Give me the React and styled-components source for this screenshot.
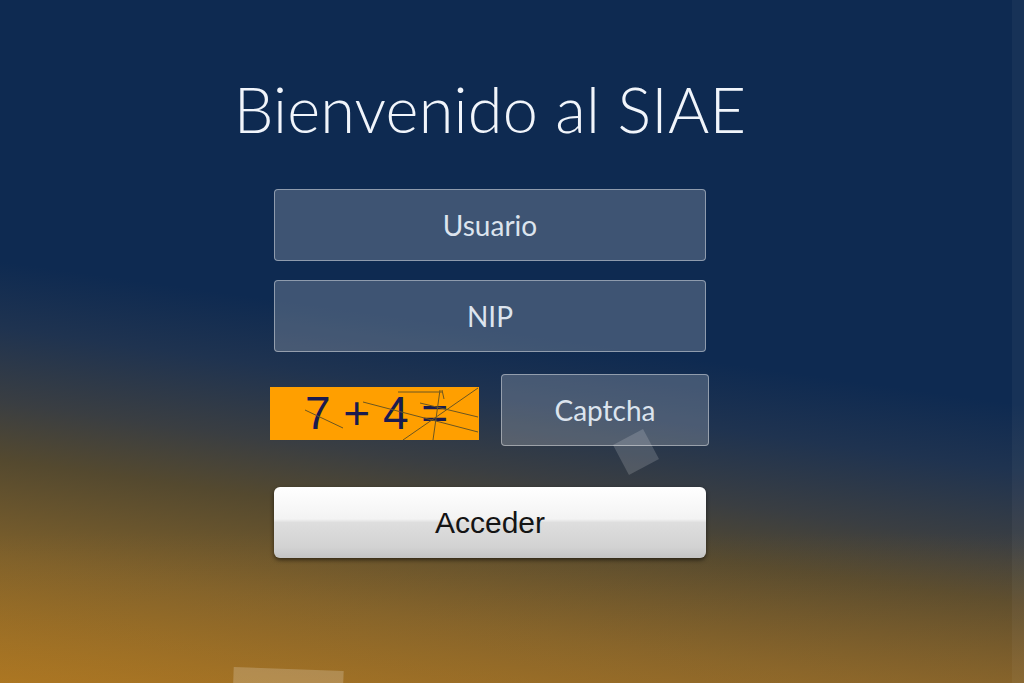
import React from "react";
import styled, { createGlobalStyle } from "styled-components";

const GlobalStyle = createGlobalStyle`
  html, body {
    margin: 0;
    padding: 0;
    height: 100%;
  }

  body {
    font-family: Lato, "Open Sans", sans-serif;
  }

  * {
    box-sizing: border-box;
  }
`;

const Page = styled.div`
  position: relative;
  overflow: hidden;
  min-height: 100vh;
  display: flex;
  flex-direction: column;
  align-items: center;
  padding: 77px 44px 0 0;
  background:
    linear-gradient(to bottom, rgba(170, 115, 40, 0) 78%, rgba(170, 115, 40, 0.3) 100%),
    linear-gradient(
      188deg,
      #0e2a51 0%,
      #0e2a51 49%,
      #1f3350 57%,
      #3a3e42 66%,
      #54492f 73%,
      #7f612b 85%,
      #ad7820 100%
    );

  &::after {
    content: "";
    position: absolute;
    top: 0;
    right: 0;
    width: 12px;
    height: 100%;
    background: rgba(255, 255, 255, 0.04);
  }
`;

const Title = styled.h1`
  margin: 0 0 48px;
  font-family: Lato, "Open Sans", sans-serif;
  font-weight: 300;
  font-size: 63px;
  line-height: 64px;
  color: #f1f5fb;
  letter-spacing: 0.2px;
`;

const Form = styled.form`
  width: 432px;
  display: flex;
  flex-direction: column;
`;

const Field = styled.input`
  width: ${(p) => p.$width || "100%"};
  height: 72px;
  margin-bottom: ${(p) => p.$gap || "19px"};
  border: 1px solid rgba(255, 255, 255, 0.42);
  border-radius: 4px;
  background: rgba(255, 255, 255, 0.2);
  color: #e4ebf3;
  font-family: Lato, "Open Sans", sans-serif;
  font-size: 28px;
  text-align: center;
  outline: none;

  &::placeholder {
    color: #dce4ee;
    opacity: 1;
  }
`;

const CaptchaRow = styled.div`
  display: flex;
  align-items: center;
  gap: 22px;
  margin: 0 -3px 41px -4px;
`;

const CaptchaImage = styled.div`
  position: relative;
  width: 209px;
  height: 53px;
  margin-top: 7px;
  background: #ff9f00;
  display: flex;
  align-items: center;
  padding-left: 35px;
`;

const CaptchaText = styled.span`
  font-family: "Liberation Sans", Arial, sans-serif;
  font-size: 46px;
  line-height: 53px;
  color: #1a1b4f;
  white-space: pre;
`;

const Noise = styled.svg`
  position: absolute;
  inset: 0;
  width: 100%;
  height: 100%;
`;

const SubmitButton = styled.button`
  height: 71px;
  width: 100%;
  border: none;
  border-radius: 6px;
  background: linear-gradient(
    to bottom,
    #ffffff 0%,
    #f3f3f3 45%,
    #dedede 50%,
    #d2d2d2 85%,
    #c4c4c4 100%
  );
  box-shadow: 0 2px 4px rgba(0, 0, 0, 0.55);
  font-family: "Liberation Sans", Arial, sans-serif;
  font-size: 30px;
  color: #141414;
  padding-top: 2px;
  cursor: pointer;
`;

const Tile = styled.div`
  position: absolute;
  left: ${(p) => p.$x}px;
  top: ${(p) => p.$y}px;
  width: ${(p) => p.$w}px;
  height: ${(p) => p.$h}px;
  background: rgba(255, 255, 255, ${(p) => p.$alpha});
  transform: rotate(${(p) => p.$rot}deg);
  pointer-events: none;
`;

const lines = [
  [35, 23, 73, 41],
  [93, 15, 208, 45],
  [128, 5, 172, 5],
  [172, 3, 174, 12],
  [133, 53, 208, 1],
  [150, 16, 208, 30],
  [170, 3, 163, 53],
];

const App = () => {
  return (
    <>
      <GlobalStyle />
      <Page>
        <Title>Bienvenido al SIAE</Title>
        <Form onSubmit={(e) => e.preventDefault()}>
          <Field placeholder="Usuario" />
          <Field placeholder="NIP" type="password" $gap="22px" />
          <CaptchaRow>
            <CaptchaImage>
              <CaptchaText>7 + 4 =</CaptchaText>
              <Noise viewBox="0 0 209 53">
                {lines.map(([x1, y1, x2, y2], i) => (
                  <line
                    key={i}
                    x1={x1}
                    y1={y1}
                    x2={x2}
                    y2={y2}
                    stroke="#6b5622"
                    strokeWidth="1"
                  />
                ))}
              </Noise>
            </CaptchaImage>
            <Field placeholder="Captcha" $width="208px" $gap="0" />
          </CaptchaRow>
          <SubmitButton type="submit">Acceder</SubmitButton>
        </Form>
        <Tile $x={619} $y={435} $w={34} $h={34} $alpha={0.16} $rot={-28} />
        <Tile $x={233} $y={669} $w={110} $h={40} $alpha={0.2} $rot={2} />
      </Page>
    </>
  );
};

export default App;
